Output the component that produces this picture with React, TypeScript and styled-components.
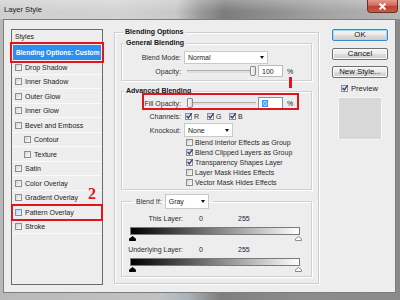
import styled, { createGlobalStyle } from 'styled-components'

const styleItems = [
  { label: 'Drop Shadow' },
  { label: 'Inner Shadow' },
  { label: 'Outer Glow' },
  { label: 'Inner Glow' },
  { label: 'Bevel and Emboss' },
  { label: 'Contour', indent: true },
  { label: 'Texture', indent: true },
  { label: 'Satin' },
  { label: 'Color Overlay' },
  { label: 'Gradient Overlay' },
  { label: 'Pattern Overlay', marked: true },
  { label: 'Stroke' },
]

const advancedChecks = [
  { label: 'Blend Interior Effects as Group', checked: false },
  { label: 'Blend Clipped Layers as Group', checked: true },
  { label: 'Transparency Shapes Layer', checked: true },
  { label: 'Layer Mask Hides Effects', checked: false },
  { label: 'Vector Mask Hides Effects', checked: false },
]

const CheckBox = ({ checked = false, hover = false }: { checked?: boolean; hover?: boolean }) => (
  <Check $hover={hover}>
    {checked && (
      <svg width="6" height="6" viewBox="0 0 6 6" style={{ overflow: 'visible' }}>
        <path d="M0.6 3 L2.3 5 L5.6 0.4" stroke="#24437e" strokeWidth="1.3" fill="none" />
      </svg>
    )}
  </Check>
)

const Marker = ({ dark }: { dark?: boolean }) => (
  <svg width="7" height="5" viewBox="0 0 7 5">
    <path
      d="M3.5 0.5 L6.5 2.8 V4.5 H0.5 V2.8 Z"
      fill={dark ? '#000' : '#fff'}
      stroke={dark ? '#000' : '#8a8a8a'}
      strokeWidth="1"
    />
  </svg>
)

const Slider = ({ value }: { value: number }) => (
  <SliderWrap>
    <Track />
    <Thumb style={{ left: (value / 100) * 63 }} />
  </SliderWrap>
)

const LayerBlend = ({ label, first }: { label: string; first?: boolean }) => (
  <>
    <LayerRow $mt={first ? 4 : 3}>
      <Label>{label}</Label>
      <Num>0</Num>
      <Num>255</Num>
    </LayerRow>
    <GradientBar />
    <Markers>
      <Marker dark />
      <Marker />
    </Markers>
  </>
)

const App = () => {
  return (
    <>
      <Global />
      <Frame>
        <TitleBar>
          <Title>Layer Style</Title>
          <Close>
            <svg width="9" height="7" viewBox="0 0 9 7">
              <path d="M1.5 0.5 L7.5 6.5 M7.5 0.5 L1.5 6.5" stroke="#fff" strokeWidth="2" />
            </svg>
          </Close>
        </TitleBar>
        <Body>
          <StylesList>
            <ListHeader>Styles</ListHeader>
            <BlendRow>Blending Options: Custom</BlendRow>
            {styleItems.map((item) => (
              <StyleRow key={item.label} $indent={item.indent} $marked={item.marked}>
                <CheckBox hover={item.marked} />
                {item.label}
              </StyleRow>
            ))}
            <Two>2</Two>
          </StylesList>

          <OuterSet>
            <Legend>Blending Options</Legend>

            <Group>
              <Legend>General Blending</Legend>
              <Row $h={14} $mt={3}>
                <Label>Blend Mode:</Label>
                <Select $w={84} $h={13}>
                  Normal <Caret />
                </Select>
              </Row>
              <Row $h={12} $mt={1}>
                <Label>Opacity:</Label>
                <Controls>
                  <Slider value={100} />
                  <Field>100</Field>
                  <Percent>%</Percent>
                </Controls>
              </Row>
            </Group>

            <Group $mt={6} $pb={2}>
              <Legend>Advanced Blending</Legend>
              <Row $h={12} $mt={2}>
                <Label>Fill Opacity:</Label>
                <Controls>
                  <Slider value={0} />
                  <Field $focus>
                    <Selected>0</Selected>
                  </Field>
                  <Percent>%</Percent>
                </Controls>
                <RedBox />
                <OneMark />
              </Row>
              <Row $h={12} $mt={1}>
                <Label>Channels:</Label>
                <Controls>
                  {['R', 'G', 'B'].map((c) => (
                    <Channel key={c}>
                      <CheckBox checked />
                      {c}
                    </Channel>
                  ))}
                </Controls>
              </Row>
              <Row $h={14} $mt={1}>
                <Label>Knockout:</Label>
                <Select $w={49} $h={14}>
                  None <Caret />
                </Select>
              </Row>
              <CheckStack>
                {advancedChecks.map((c) => (
                  <CheckRow key={c.label}>
                    <CheckBox checked={c.checked} />
                    {c.label}
                  </CheckRow>
                ))}
              </CheckStack>
            </Group>

            <Group $mt={4} $pb={4}>
              <BlendIfLegend>
                Blend If:
                <Select $w={44} $h={15}>
                  Gray <Caret />
                </Select>
              </BlendIfLegend>
              <LayerBlend label="This Layer:" first />
              <LayerBlend label="Underlying Layer:" />
            </Group>
          </OuterSet>

          <RightCol>
            <ButtonStack>
              <Button $primary>OK</Button>
              <Button>Cancel</Button>
              <Button>New Style...</Button>
            </ButtonStack>
            <PreviewRow>
              <CheckBox checked />
              Preview
            </PreviewRow>
            <Swatch />
          </RightCol>
        </Body>
      </Frame>
    </>
  )
}

export default App

const Global = createGlobalStyle`
  html, body {
    margin: 0;
    padding: 0;
    background: #9a9a9a;
  }
  body {
    width: 400px;
    height: 300px;
    overflow: hidden;
    font-family: "Liberation Sans", Arial, sans-serif;
  }
`

const Frame = styled.div`
  width: 400px;
  height: 300px;
  display: flex;
  flex-direction: column;
  box-sizing: border-box;
  background: linear-gradient(90deg, #b9b9b9 0%, #c2c2c2 40%, #a9b3b9 47%, #7f7f7f 55%, #8c8c8c 75%, #8a8a8a 100%);
`

const TitleBar = styled.div`
  height: 19px;
  display: flex;
  justify-content: space-between;
  align-items: flex-start;
  background:
    linear-gradient(180deg, rgba(255, 255, 255, 0.25), rgba(255, 255, 255, 0) 60%),
    linear-gradient(90deg, #cfcfcf 0%, #d2d2d2 30%, #c8c8c8 44%, #9a9a9a 50%, #7c7c7c 56%, #868686 62%, #a2a2a2 80%, #b6b6b6 100%);
`

const Title = styled.span`
  font-size: 7.6px;
  line-height: 8px;
  color: #1b1b1b;
  padding: 6px 0 0 4px;
`

const Close = styled.div`
  width: 31px;
  height: 13px;
  margin-right: 2px;
  box-sizing: border-box;
  display: flex;
  align-items: center;
  justify-content: center;
  border: 1px solid #6a2f26;
  border-top: none;
  border-radius: 0 0 4px 4px;
  background: linear-gradient(180deg, #e29a8c 0%, #d06a58 45%, #c0412f 55%, #c95a44 100%);
`

const Body = styled.div`
  flex: 1;
  margin: 0 4px 7px 3px;
  border: 1px solid #7d7d7d;
  background: #ededed;
  display: flex;
  align-items: flex-start;
  padding: 9px 0 0 7px;
`

const StylesList = styled.div`
  position: relative;
  flex-shrink: 0;
  width: 92px;
  height: 256px;
  box-sizing: border-box;
  border: 1px solid #6b6b6b;
  background: #eeeeee;
  font-size: 7px;
  color: #222;
`

const ListHeader = styled.div`
  height: 15px;
  display: flex;
  align-items: center;
  padding: 0 0 2px 3px;
  box-sizing: border-box;
`

const BlendRow = styled.div`
  height: 15px;
  margin: 0 1px;
  padding-left: 3px;
  display: flex;
  align-items: center;
  background: #2f8fef;
  color: #fff;
  font-weight: bold;
  font-size: 6.6px;
  outline: 2px solid #e2141c;
  outline-offset: 1px;
`

const StyleRow = styled.div<{ $indent?: boolean; $marked?: boolean }>`
  height: 14.5px;
  display: flex;
  align-items: center;
  gap: 3px;
  padding-left: ${(p) => (p.$indent ? 12 : 3)}px;
  box-shadow: inset 0 -1px 0 #fafafa;
  outline: ${(p) => (p.$marked ? '2px solid #e2141c' : 'none')};
  outline-offset: -1px;
`

const Two = styled.span`
  position: absolute;
  left: 76px;
  top: 156px;
  font-family: "Liberation Serif", serif;
  font-weight: bold;
  font-size: 16px;
  line-height: 16px;
  color: #e2141c;
`

const Check = styled.span<{ $hover?: boolean }>`
  width: 7px;
  height: 7px;
  flex-shrink: 0;
  box-sizing: border-box;
  display: inline-flex;
  align-items: center;
  justify-content: center;
  border: 1px solid ${(p) => (p.$hover ? '#5c9ad2' : '#8e8e8e')};
  background: ${(p) =>
    p.$hover ? 'linear-gradient(135deg, #bcdcf6, #e6f3fd)' : 'linear-gradient(135deg, #d4d4d4, #fbfbfb)'};
`

const OuterSet = styled.fieldset`
  position: relative;
  margin: -1px 0 0 11px;
  padding: 3px 6px 6px;
  width: 205px;
  min-width: 0;
  box-sizing: border-box;
  border: 1px solid #cdcdcd;
  box-shadow: inset 1px 1px 0 #fff, 1px 1px 0 #fff;
  display: flex;
  flex-direction: column;
  font-size: 7px;
  color: #2a2a2a;
`

const Legend = styled.legend`
  font-weight: bold;
  font-size: 7px;
  line-height: 8px;
  color: #151515;
  padding: 0 2px;
  margin-left: 2px;
  background: #ededed;
`

const Group = styled.fieldset<{ $mt?: number; $pb?: number }>`
  margin: ${(p) => p.$mt ?? 0}px 0 0;
  padding: 0 0 ${(p) => p.$pb ?? 3}px;
  min-width: 0;
  border: 1px solid #d0d0d0;
  box-shadow: inset 1px 1px 0 #fff, 1px 1px 0 #fff;
  display: flex;
  flex-direction: column;
`

const Row = styled.div<{ $h: number; $mt?: number }>`
  position: relative;
  height: ${(p) => p.$h}px;
  margin-top: ${(p) => p.$mt ?? 0}px;
  display: grid;
  grid-template-columns: 59px 1fr;
  column-gap: 3px;
  align-items: center;
`

const Label = styled.span`
  text-align: right;
  white-space: nowrap;
  color: #2e2e2e;
`

const Controls = styled.div`
  display: flex;
  align-items: center;
`

const Select = styled.div<{ $w: number; $h: number }>`
  width: ${(p) => p.$w}px;
  height: ${(p) => p.$h}px;
  box-sizing: border-box;
  border: 1px solid #c9c9c9;
  background: #fff;
  display: flex;
  align-items: center;
  justify-content: space-between;
  padding: 0 3px;
  font-weight: normal;
  font-size: 7px;
  color: #1a1a1a;
`

const Caret = styled.span`
  width: 0;
  height: 0;
  border-left: 2.5px solid transparent;
  border-right: 2.5px solid transparent;
  border-top: 3px solid #111;
`

const SliderWrap = styled.div`
  position: relative;
  width: 69px;
  height: 12px;
  margin-left: 3px;
  display: flex;
  align-items: center;
`

const Track = styled.div`
  flex: 1;
  height: 2px;
  border-top: 1px solid #b0b0b0;
  background: #dedede;
`

const Thumb = styled.div`
  position: absolute;
  top: 1px;
  width: 6px;
  height: 10px;
  box-sizing: border-box;
  border: 1px solid #8a8a8a;
  border-radius: 1px 1px 2px 2px;
  background: linear-gradient(90deg, #fff, #d8d8d8);
`

const Field = styled.div<{ $focus?: boolean }>`
  width: 25px;
  height: 12px;
  margin-left: 2px;
  box-sizing: border-box;
  border: 1px solid ${(p) => (p.$focus ? '#6d96c8' : '#b9b9b9')};
  background: #fff;
  display: flex;
  align-items: center;
  padding-left: 3px;
  color: #1a1a1a;
`

const Selected = styled.span`
  background: #3399ff;
  color: #fff;
  padding: 0 1px;
`

const Percent = styled.span`
  margin-left: 4px;
  color: #1a1a1a;
`

const RedBox = styled.div`
  position: absolute;
  left: 20px;
  top: -4px;
  width: 157px;
  height: 17px;
  box-sizing: border-box;
  border: 2px solid #e2141c;
  pointer-events: none;
`

const OneMark = styled.div`
  position: absolute;
  left: 167px;
  top: -20px;
  width: 3px;
  height: 11px;
  background: #e2141c;
`

const Channel = styled.span`
  width: 21px;
  display: flex;
  align-items: center;
  gap: 2px;
  margin-left: 1px;
  color: #2a2a2a;
`

const CheckStack = styled.div`
  margin-left: 64px;
  display: flex;
  flex-direction: column;
`

const CheckRow = styled.div`
  height: 10px;
  display: flex;
  align-items: center;
  gap: 2px;
  white-space: nowrap;
  color: #2a2a2a;
`

const BlendIfLegend = styled.legend`
  display: flex;
  align-items: center;
  gap: 3px;
  margin-left: 10px;
  padding: 0 4px;
  font-size: 7px;
  color: #2e2e2e;
`

const LayerRow = styled.div<{ $mt: number }>`
  height: 10px;
  margin-top: ${(p) => p.$mt}px;
  display: grid;
  grid-template-columns: 61px 55px 1fr;
  align-items: center;
`

const Num = styled.span`
  padding-left: 16px;
  color: #1c1c3c;
  &:last-child {
    padding-left: 0;
  }
`

const GradientBar = styled.div`
  height: 8px;
  margin: 4px 11px 0 8px;
  box-sizing: border-box;
  border: 1px solid #7a7a7a;
  background: linear-gradient(90deg, #000, #fff);
`

const Markers = styled.div`
  height: 5px;
  margin: 1px 9px 0 7px;
  display: flex;
  justify-content: space-between;
`

const RightCol = styled.div`
  width: 56px;
  margin-left: 13px;
  display: flex;
  flex-direction: column;
`

const ButtonStack = styled.div`
  display: flex;
  flex-direction: column;
  gap: 6.5px;
`

const Button = styled.button<{ $primary?: boolean }>`
  width: 56px;
  height: 12px;
  padding: 0;
  font-family: "Liberation Sans", Arial, sans-serif;
  font-size: 7.8px;
  line-height: 10px;
  color: #151515;
  border: 1px solid ${(p) => (p.$primary ? '#3d87c0' : '#707070')};
  border-radius: 2px;
  box-shadow: ${(p) => (p.$primary ? 'inset 0 0 0 1px #9fdcf6' : 'inset 0 0 0 1px #fafafa')};
  background: linear-gradient(180deg, #f4f4f4 0%, #ebebeb 50%, #dcdcdc 51%, #d0d0d0 100%);
`

const PreviewRow = styled.div`
  height: 8px;
  margin: 6px 0 0 9px;
  display: flex;
  align-items: center;
  gap: 3px;
  font-size: 7.6px;
  color: #222;
`

const Swatch = styled.div`
  width: 44px;
  height: 43px;
  margin: 5px 0 0 6px;
  box-sizing: border-box;
  border: 1px solid #f6f6f6;
  background: #d8d8d8;
`
